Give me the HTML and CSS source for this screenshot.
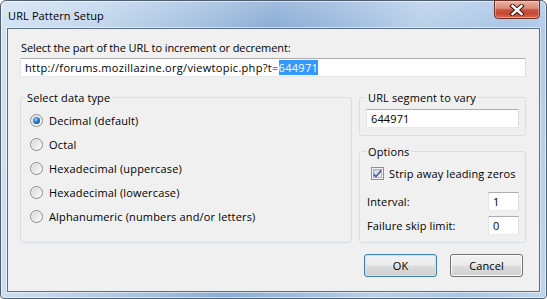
FILE: index.html
```html
<!DOCTYPE html>
<html>
<head>
<meta charset="utf-8">
<link rel="stylesheet" href="styles.css">
</head>
<body>
<div class="window">
  <div class="titlebar">
    <span class="title">URL Pattern Setup</span>
    <div class="close">
      <svg width="16" height="12" viewBox="0 0 16 12">
        <path d="M3.5 2 L12.5 10 M12.5 2 L3.5 10" stroke="#3b1410" stroke-width="4.4" stroke-linecap="square"/>
        <path d="M3.5 2 L12.5 10 M12.5 2 L3.5 10" stroke="#ffffff" stroke-width="2.4" stroke-linecap="square"/>
      </svg>
    </div>
  </div>
  <div class="client">
    <div class="prompt">Select the part of the URL to increment or decrement:</div>
    <div class="textbox url">http://forums.mozillazine.org/viewtopic.php?t=<span class="sel">644971</span></div>
    <div class="groups">
      <fieldset class="group types">
        <legend>Select data type</legend>
        <div class="radios">
          <div class="radio checked"><span class="rbtn"></span>Decimal (default)</div>
          <div class="radio"><span class="rbtn"></span>Octal</div>
          <div class="radio"><span class="rbtn"></span>Hexadecimal (uppercase)</div>
          <div class="radio"><span class="rbtn"></span>Hexadecimal (lowercase)</div>
          <div class="radio"><span class="rbtn"></span>Alphanumeric (numbers and/or letters)</div>
        </div>
      </fieldset>
      <div class="rightcol">
        <fieldset class="group seg">
          <legend>URL segment to vary</legend>
          <div class="seg-body"><div class="textbox">644971</div></div>
        </fieldset>
        <fieldset class="group opts">
          <legend>Options</legend>
          <div class="opts-body">
            <div class="check">
              <svg class="cbox" width="13" height="13" viewBox="0 0 13 13">
                <defs>
                  <linearGradient id="cg" x1="0" y1="0" x2="1" y2="1">
                    <stop offset="0" stop-color="#c9d0da"/>
                    <stop offset="1" stop-color="#f3f5f8"/>
                  </linearGradient>
                </defs>
                <rect x="0.5" y="0.5" width="12" height="12" fill="#f5f5f5" stroke="#8e8f8f"/>
                <rect x="2.5" y="2.5" width="8" height="8" fill="url(#cg)" stroke="#aab0b8"/>
                <path d="M2.6 6.2 L5 8.4 L9.9 2.6 L10.4 4.6 L5 10.6 L2.6 8.4 Z" fill="#40509a"/>
              </svg>
              <span>Strip away leading zeros</span>
            </div>
            <div class="field"><span>Interval:</span><div class="textbox small">1</div></div>
            <div class="field"><span>Failure skip limit:</span><div class="textbox small">0</div></div>
          </div>
        </fieldset>
      </div>
    </div>
    <div class="buttons">
      <button class="btn default">OK</button>
      <button class="btn">Cancel</button>
    </div>
  </div>
</div>
</body>
</html>
```
FILE: styles.css
```css
* { box-sizing: border-box; }
html, body { margin: 0; padding: 0; background: #ffffff; }
body {
  width: 547px;
  height: 299px;
  overflow: hidden;
  font-family: "Open Sans", "Noto Sans", sans-serif;
  font-size: 11px;
  letter-spacing: 0.12px;
  color: #000;
}
.window {
  width: 547px;
  height: 299px;
  border: 1px solid #4f5f70;
  border-radius: 6px 6px 4px 4px;
  padding: 0 6px 6px 6px;
  display: flex;
  flex-direction: column;
  background:
    linear-gradient(180deg, rgba(255,255,255,0.18), rgba(255,255,255,0) 28px),
    linear-gradient(100deg, #d3e3f4 0%, #c3d7ed 16%, #a8c3e2 32%, #8badd5 46%, #9cbade 57%, #b9d0ea 71%, #a9c5e6 86%, #bfd5ee 100%);
  box-shadow: inset 0 0 0 1px rgba(255,255,255,0.55);
}
.titlebar {
  height: 27px;
  display: flex;
  justify-content: space-between;
  align-items: flex-start;
}
.title {
  margin-top: 7px;
  margin-left: 1px;
  line-height: 15px;
}
.close {
  width: 46px;
  height: 19px;
  margin-top: -1px;
  border: 1px solid #6a2f27;
  border-radius: 0 0 4px 4px;
  background: linear-gradient(180deg, #eab0a2 0%, #dc8d79 42%, #c9553f 52%, #c34934 75%, #dd6a4c 100%);
  box-shadow: inset 0 0 0 1px rgba(255,255,255,0.35);
  display: flex;
  align-items: center;
  justify-content: center;
}
.close svg { display: block; }
.client {
  flex: 1;
  background: #f0f0f0;
  border: 1px solid #5a6d82;
  box-shadow: 0 0 0 1px rgba(255,255,255,0.55);
  padding: 11px 13px 0 12px;
  display: flex;
  flex-direction: column;
}
.prompt {
  line-height: 15px;
  margin-left: 1px;
  letter-spacing: -0.1px;
}
.textbox {
  height: 19px;
  background: #fff;
  border: 1px solid;
  border-color: #abadb3 #dbdfe6 #e3e9ef #e2e3ea;
  padding: 0 4px;
  line-height: 17px;
  white-space: nowrap;
  overflow: hidden;
}
.url { margin-top: 3px; letter-spacing: 0.3px; }
.sel { background: #3399ff; color: #fff; }
.groups {
  margin-top: 13px;
  display: flex;
  gap: 7px;
  height: 153px;
}
.group {
  margin: 0;
  padding: 0;
  border: 1px solid #d5dfe5;
  border-radius: 3px;
  min-width: 0;
}
.group legend {
  padding: 0 2px;
  line-height: 15px;
}
.types { width: 332px; }
.types legend { margin-left: 4px; }
.radios { padding: 3px 0 0 9px; letter-spacing: 0.16px; }
.radio {
  height: 24px;
  display: flex;
  align-items: center;
}
.rbtn {
  flex: none;
  width: 13px;
  height: 13px;
  margin-right: 6px;
  border-radius: 50%;
  border: 1px solid #8c8c8c;
  background: linear-gradient(135deg, #cfcfcf 0%, #eeeeee 60%, #fafafa 100%);
  box-shadow: inset 0 0 0 1px #f3f3f3;
  position: relative;
}
.radio.checked .rbtn::after {
  content: "";
  position: absolute;
  left: 2px;
  top: 2px;
  width: 7px;
  height: 7px;
  border-radius: 50%;
  background: radial-gradient(circle at 40% 35%, #9ad6ff 0%, #3b8bd9 35%, #174c8c 75%, #0e3565 100%);
}
.rightcol {
  width: 167px;
  display: flex;
  flex-direction: column;
  gap: 8px;
}
.seg { height: 46px; }
.seg legend, .opts legend { margin-left: 6px; }
.seg-body { padding: 4px 6px 0 6px; }
.opts { flex: 1; }
.opts-body { padding: 5px 6px 0 7px; }
.check {
  height: 18px;
  display: flex;
  align-items: center;
  margin-left: 4px;
}
.cbox { display: block; flex: none; margin-right: 5px; }
.field {
  margin-top: 5px;
  height: 19px;
  display: flex;
  align-items: center;
  justify-content: space-between;
}
.check + .field { margin-top: 10px; }
.textbox.small { width: 31px; padding-left: 4px; }
.buttons {
  margin-top: 11px;
  display: flex;
  justify-content: flex-end;
  gap: 13px;
  padding-right: 3px;
}
.btn {
  width: 73px;
  height: 23px;
  padding: 0;
  font: inherit;
  letter-spacing: 0.12px;
  color: #000;
  border: 1px solid #707070;
  border-radius: 3px;
  background: linear-gradient(180deg, #f2f2f2 0%, #ebebeb 48%, #dddddd 52%, #cfcfcf 100%);
  box-shadow: inset 0 0 0 1px #fbfbfb;
}
.btn.default {
  border-color: #3c7fb1;
  box-shadow: inset 0 0 0 1px #c3e6f8;
}
```
